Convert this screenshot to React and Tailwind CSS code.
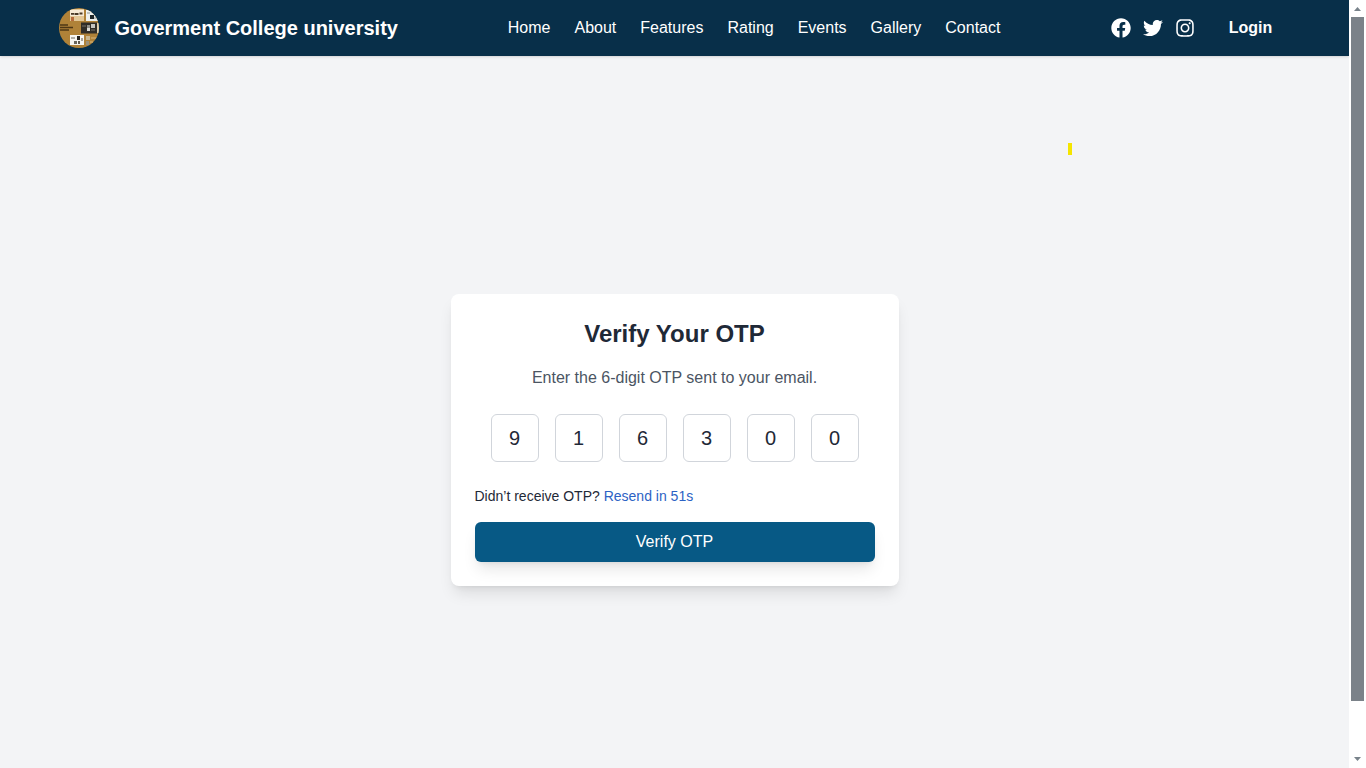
import React from "react";
import { FaFacebook, FaTwitter, FaInstagram } from "react-icons/fa";

const links = ["Home", "About", "Features", "Rating", "Events", "Gallery", "Contact"];
const digits = ["9", "1", "6", "3", "0", "0"];

function Logo() {
  return (
    <svg className="h-10 w-10 rounded-full" viewBox="0 0 40 40" aria-hidden="true">
      <rect width="40" height="40" fill="#b08238" />
      <rect x="11" y="1" width="14" height="12" fill="#e3c898" />
      <rect x="11" y="2" width="14" height="6" fill="#f7ead6" />
      <path d="M12 5.8h3M15.500 6h4M20.500 5.500h3" stroke="#4a3a28" strokeWidth="1.8" />
      <rect x="12" y="9" width="3" height="4" fill="#b66a3c" />
      <rect x="27" y="2" width="12" height="11" fill="#eef1ef" />
      <rect x="31" y="7" width="4" height="4" fill="#1c2528" />
      <path d="M28 5h3M35 10h2" stroke="#8b9492" strokeWidth="1" />
      <path d="M1 17h8M1 19.5h13M1 22h9" stroke="#4e3715" strokeWidth="1.4" />
      <rect x="22" y="14.5" width="16" height="11" fill="#302d27" />
      <rect x="28" y="17" width="3" height="3" fill="#8f8e88" />
      <rect x="32" y="16" width="4" height="4" fill="#c5c4be" />
      <rect x="28" y="20" width="3" height="3" fill="#dddcd6" />
      <path d="M23 18h4M32 22h4" stroke="#77736a" strokeWidth="1" />
      <rect x="38" y="15" width="2" height="10" fill="#dfd0b2" />
      <rect x="11" y="27" width="14" height="10" fill="#f6f5f0" />
      <path d="M12 30h4" stroke="#6d695f" strokeWidth="1" />
      <rect x="18" y="28" width="3" height="4" fill="#24221e" />
      <rect x="22" y="30" width="2" height="3" fill="#a9a59b" />
      <rect x="15" y="33" width="3" height="3" fill="#69655b" />
      <rect x="19" y="33" width="2" height="3" fill="#60594d" />
      <rect x="27" y="28" width="4" height="4" fill="#c9b68f" />
      <rect x="27" y="33" width="3" height="4" fill="#9c9178" />
      <path d="M32 30h6M31 34h3" stroke="#d8b67c" strokeWidth="1" />
    </svg>
  );
}

function Header() {
  return (
    <header className="flex h-14 shrink-0 items-center bg-[#082f49] pl-[58.5px] text-white shadow-sm">
      <div className="flex w-[449.3px] items-center gap-4">
        <Logo />
        <span className="text-xl font-bold">Goverment College university</span>
      </div>
      <nav className="flex w-[603px] gap-6 whitespace-nowrap">
        {links.map((label) => (
          <a key={label}>{label}</a>
        ))}
      </nav>
      <div className="flex gap-3">
        <FaFacebook size={20} />
        <FaTwitter size={20} />
        <FaInstagram size={20} />
      </div>
      <a className="ml-[34px] font-bold">Login</a>
    </header>
  );
}

function OtpCard() {
  return (
    <section className="w-full max-w-md rounded-lg bg-white p-6 shadow-lg">
      <h1 className="text-center text-2xl font-bold text-[#1f2937]">Verify Your OTP</h1>
      <p className="mt-4 text-center text-[#4b5563]">Enter the 6-digit OTP sent to your email.</p>
      <div className="mt-6 flex justify-center gap-4">
        {digits.map((digit, i) => (
          <div
            key={i}
            className="flex h-12 w-12 items-center justify-center rounded-md border border-[#d1d5db] text-xl text-[#1f2937]"
          >
            {digit}
          </div>
        ))}
      </div>
      <p className="mt-6 text-sm text-[#1f2937]">
        Didn’t receive OTP? <span className="text-[#2c62c4]">Resend in 51s</span>
      </p>
      <button className="mt-4 block h-10 w-full rounded-md bg-[#075985] text-white shadow-lg">
        Verify OTP
      </button>
    </section>
  );
}

function Scrollbar() {
  return (
    <div className="flex w-[17px] shrink-0 flex-col items-center justify-between bg-white">
      <div className="flex flex-col items-center">
        <svg className="h-[17px] w-[13px]" viewBox="0 0 13 17" aria-hidden="true">
          <path d="M6.5 7 10 11H3Z" fill="#78828a" />
        </svg>
        <div className="h-[684px] w-[13px] bg-[#7b8289]" />
      </div>
      <svg className="h-[17px] w-[13px]" viewBox="0 0 13 17" aria-hidden="true">
        <path d="M3 6H10L6.5 10Z" fill="#78828a" />
      </svg>
    </div>
  );
}

export default function App() {
  return (
    <div className="flex h-[768px] w-[1366px] overflow-hidden font-['Liberation_Sans',Arial,sans-serif] text-base">
      <div className="relative flex min-w-0 flex-1 flex-col overflow-hidden bg-[#f3f4f6]">
        <Header />
        <main className="flex h-[768px] shrink-0 items-center justify-center">
          <OtpCard />
        </main>
        <span className="absolute left-[1068px] top-[143px] h-3 w-1 bg-[#f5e500]" />
      </div>
      <Scrollbar />
    </div>
  );
}
